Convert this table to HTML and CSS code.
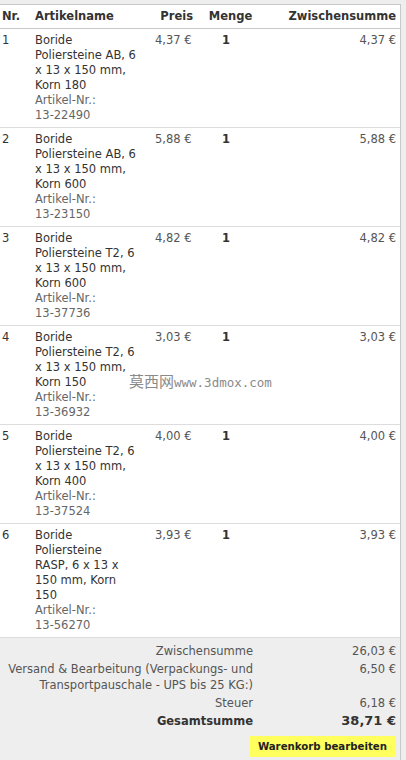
FILE: index.html
```html
<!DOCTYPE html>
<html lang="de">
<head>
    <meta charset="UTF-8">
    <meta name="viewport" content="width=device-width, initial-scale=1.0">
    <title>Warenkorb</title>
    <link rel="stylesheet" href="styles.css">
</head>
<body>
    <div class="cart">
        <table class="items">
            <colgroup>
                <col class="c-nr">
                <col class="c-name">
                <col class="c-price">
                <col class="c-qty">
                <col class="c-sum">
            </colgroup>
            <thead>
                <tr>
                    <th class="nr">Nr.</th>
                    <th class="name">Artikelname</th>
                    <th class="price">Preis</th>
                    <th class="qty">Menge</th>
                    <th class="sum">Zwischensumme</th>
                </tr>
            </thead>
            <tbody>
                <tr>
                    <td class="nr">1</td>
                    <td class="name">Boride Poliersteine AB, 6 x 13 x 150 mm, Korn 180<span class="sku">Artikel-Nr.:<br>13-22490</span></td>
                    <td class="price">4,37 €</td>
                    <td class="qty">1</td>
                    <td class="sum">4,37 €</td>
                </tr>
                <tr>
                    <td class="nr">2</td>
                    <td class="name">Boride Poliersteine AB, 6 x 13 x 150 mm, Korn 600<span class="sku">Artikel-Nr.:<br>13-23150</span></td>
                    <td class="price">5,88 €</td>
                    <td class="qty">1</td>
                    <td class="sum">5,88 €</td>
                </tr>
                <tr>
                    <td class="nr">3</td>
                    <td class="name">Boride Poliersteine T2, 6 x 13 x 150 mm, Korn 600<span class="sku">Artikel-Nr.:<br>13-37736</span></td>
                    <td class="price">4,82 €</td>
                    <td class="qty">1</td>
                    <td class="sum">4,82 €</td>
                </tr>
                <tr>
                    <td class="nr">4</td>
                    <td class="name">Boride Poliersteine T2, 6 x 13 x 150 mm, Korn 150<span class="sku">Artikel-Nr.:<br>13-36932</span></td>
                    <td class="price">3,03 €</td>
                    <td class="qty">1</td>
                    <td class="sum">3,03 €</td>
                </tr>
                <tr>
                    <td class="nr">5</td>
                    <td class="name">Boride Poliersteine T2, 6 x 13 x 150 mm, Korn 400<span class="sku">Artikel-Nr.:<br>13-37524</span></td>
                    <td class="price">4,00 €</td>
                    <td class="qty">1</td>
                    <td class="sum">4,00 €</td>
                </tr>
                <tr>
                    <td class="nr">6</td>
                    <td class="name">Boride Poliersteine RASP, 6 x 13 x 150 mm, Korn 150<span class="sku">Artikel-Nr.:<br>13-56270</span></td>
                    <td class="price">3,93 €</td>
                    <td class="qty">1</td>
                    <td class="sum">3,93 €</td>
                </tr>
            </tbody>
        </table>

        <div class="totals">
            <div class="label">Zwischensumme</div>
            <div class="value">26,03 €</div>
            <div class="label">Versand &amp; Bearbeitung (Verpackungs- und Transportpauschale - UPS bis 25 KG:)</div>
            <div class="value">6,50 €</div>
            <div class="label">Steuer</div>
            <div class="value">6,18 €</div>
            <div class="label total">Gesamtsumme</div>
            <div class="value total-value">38,71 €</div>
        </div>

        <div class="actions">
            <button type="button" class="edit-cart">Warenkorb bearbeiten</button>
        </div>

        <div class="watermark">莫西网<span>www.3dmox.com</span></div>
    </div>
</body>
</html>
```

FILE: styles.css
```css
body {
    margin: 0;
    padding-top: 4px;
    background-color: #eeeeee;
    font-family: "DejaVu Sans", Verdana, sans-serif;
    font-size: 11.5px;
    line-height: 15px;
    color: #333333;
}
.cart {
    position: relative;
    width: 400px;
    border-top: 1px solid #c8c8c8;
    border-right: 1px solid #c8c8c8;
    background-color: #ffffff;
}
.items {
    width: 400px;
    border-collapse: collapse;
    table-layout: fixed;
}
.c-nr { width: 33px; }
.c-name { width: 120px; }
.c-price { width: 45px; }
.c-qty { width: 65px; }
.c-sum { width: 137px; }

th {
    padding: 4px 2px;
    font-weight: bold;
    color: #333333;
    border-bottom: 1px solid #c8c8c8;
    text-align: left;
}
td {
    padding: 4px 2px;
    vertical-align: top;
    border-bottom: 1px solid #dddddd;
}
th.price {
    text-align: right;
    padding-right: 5px;
}
th.qty {
    text-align: center;
}
th.sum, td.sum {
    text-align: right;
    padding-right: 4px;
}
td.name {
    padding-right: 15px;
}
td.price, td.sum {
    color: #555555;
}
td.qty {
    padding-left: 24px;
    font-weight: bold;
}
.sku {
    display: block;
    color: #666666;
}

.totals {
    display: grid;
    grid-template-columns: 253px 1fr;
    padding-top: 4px;
    background-color: #eeeeee;
    color: #555555;
    line-height: 16px;
}
.totals .label {
    text-align: right;
    padding: 1px 0;
}
.totals .value {
    text-align: right;
    padding: 1px 4px 1px 0;
}
.totals .total {
    font-weight: bold;
    color: #333333;
}
.totals .total-value {
    font-weight: bold;
    font-size: 13px;
    color: #333333;
}
.actions {
    display: flex;
    justify-content: flex-end;
    padding: 6px 4px 3px 0;
    background-color: #eeeeee;
}
.edit-cart {
    height: 21px;
    padding: 0 9px;
    border: none;
    background-color: #ffff5e;
    color: #222222;
    font-family: "DejaVu Sans", Verdana, sans-serif;
    font-size: 10.2px;
    font-weight: bold;
}

/* Wasserzeichen aus dem Original-Screenshot */
.watermark {
    position: absolute;
    left: 129px;
    top: 366px;
    font-family: "Noto Sans CJK SC", sans-serif;
    font-size: 15px;
    line-height: 20px;
    color: #8a8a8a;
    text-shadow: 0 0 2px #ffffff, 0 0 2px #ffffff;
}
.watermark span {
    font-family: "DejaVu Sans Mono", monospace;
    font-size: 12.5px;
}
```
